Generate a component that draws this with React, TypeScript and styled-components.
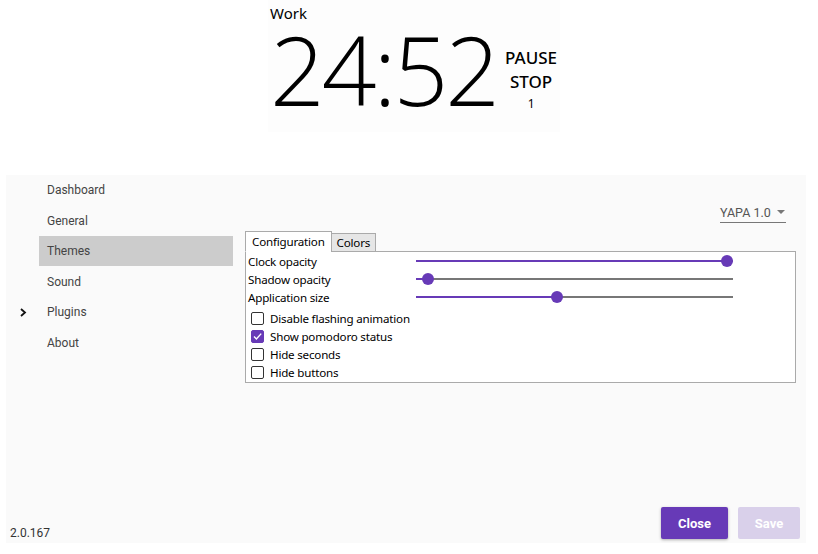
import React from "react";
import styled, { createGlobalStyle } from "styled-components";

const GlobalStyle = createGlobalStyle`
  html, body {
    margin: 0;
    padding: 0;
    background: #ffffff;
  }
  body {
    font-family: Roboto, "Noto Sans", sans-serif;
    width: 818px;
    height: 554px;
    overflow: hidden;
  }
`;

const uiFont = `"Noto Sans", "Open Sans", sans-serif`;

const Page = styled.div`
  display: flex;
  flex-direction: column;
  width: 818px;
  height: 554px;
`;

const ClockBox = styled.div`
  margin-left: 268px;
  width: 292px;
  height: 132px;
  background: #fdfdfd;
  box-sizing: border-box;
  padding: 3px 0 0 2px;
  font-family: ${uiFont};
  color: #000;
`;

const ClockTitle = styled.div`
  font-size: 15px;
  line-height: 20px;
`;

const ClockRow = styled.div`
  display: flex;
  align-items: flex-start;
`;

const Time = styled.div`
  font-family: "Open Sans", sans-serif;
  font-weight: 300;
  font-size: 96px;
  line-height: 92px;
  letter-spacing: -3px;
`;

const Controls = styled.div`
  display: flex;
  flex-direction: column;
  align-items: center;
  margin-left: 8px;
  margin-top: 23px;
`;

const ControlButton = styled.div`
  font-size: 17px;
  font-weight: 500;
  line-height: 24px;
`;

const Counter = styled.div`
  font-size: 12px;
  line-height: 16px;
  margin-top: 2px;
`;

const Panel = styled.div`
  margin: 43px 12px 11px 6px;
  height: 368px;
  background: #fafafa;
  display: flex;
  flex-direction: column;
`;

const Main = styled.div`
  flex: 1;
  display: flex;
`;

const Sidebar = styled.nav`
  width: 239px;
  display: flex;
  flex-direction: column;
`;

const NavRow = styled.div`
  display: flex;
  align-items: center;
  height: 30.5px;
`;

const Marker = styled.div`
  width: 33px;
  display: flex;
  justify-content: center;
`;

const NavItem = styled.div<{ $active?: boolean }>`
  width: 194px;
  height: 30px;
  box-sizing: border-box;
  padding-left: 8px;
  display: flex;
  align-items: center;
  font-size: 12px;
  color: #444;
  background: ${(p) => (p.$active ? "#cccccc" : "transparent")};
`;

const Content = styled.div`
  flex: 1;
  display: flex;
  flex-direction: column;
  padding: 27px 10px 0 0;
`;

const SelectRow = styled.div`
  display: flex;
  justify-content: flex-end;
  padding-right: 10px;
`;

const Select = styled.div`
  width: 66px;
  height: 21px;
  box-sizing: border-box;
  border-bottom: 1px solid #777;
  display: flex;
  align-items: center;
  justify-content: space-between;
  font-size: 12.5px;
  color: #555;
`;

const Caret = styled.span`
  width: 0;
  height: 0;
  border-left: 4px solid transparent;
  border-right: 4px solid transparent;
  border-top: 4px solid #777;
  margin-right: 1px;
`;

const Tabs = styled.div`
  display: flex;
  align-items: flex-end;
  margin-top: 8px;
  position: relative;
  z-index: 1;
  margin-bottom: -1px;
`;

const Tab = styled.div<{ $active?: boolean }>`
  font-family: ${uiFont};
  font-size: 11.6px;
  letter-spacing: -0.2px;
  color: #000;
  box-sizing: border-box;
  border: 1px solid #aaa;
  border-bottom: ${(p) => (p.$active ? "1px solid #fff" : "1px solid #aaa")};
  background: ${(p) => (p.$active ? "#ffffff" : "#e6e6e6")};
  height: ${(p) => (p.$active ? "21px" : "19px")};
  padding: ${(p) => (p.$active ? "0 6px" : "0 5px")};
  display: flex;
  align-items: center;
  margin-left: ${(p) => (p.$active ? "0" : "-1px")};
`;

const ConfigBox = styled.div`
  height: 132px;
  box-sizing: border-box;
  border: 1px solid #aaa;
  background: #ffffff;
  padding: 0 0 0 2px;
  font-family: ${uiFont};
  font-size: 11.6px;
  letter-spacing: -0.2px;
  color: #000;
`;

const SliderRow = styled.div`
  display: grid;
  grid-template-columns: 168px 317px;
  align-items: center;
  height: 18px;
`;

const Track = styled.div`
  position: relative;
  height: 2px;
  background: #777;
`;

const Fill = styled.div`
  height: 2px;
  background: #673ab7;
`;

const Thumb = styled.div`
  position: absolute;
  top: -5px;
  width: 12px;
  height: 12px;
  margin-left: -6px;
  border-radius: 50%;
  background: #673ab7;
`;

const CheckList = styled.div`
  margin-top: 3px;
  display: flex;
  flex-direction: column;
`;

const CheckRow = styled.label`
  display: flex;
  align-items: center;
  height: 18px;
  padding-left: 3px;
`;

const Box = styled.span<{ $checked?: boolean }>`
  width: 13px;
  height: 13px;
  box-sizing: border-box;
  border: 1px solid ${(p) => (p.$checked ? "#673ab7" : "#333")};
  border-radius: 2px;
  background: ${(p) => (p.$checked ? "#673ab7" : "#fff")};
  display: flex;
  align-items: center;
  justify-content: center;
  margin-right: 6px;
`;

const Footer = styled.div`
  display: flex;
  justify-content: space-between;
  align-items: flex-end;
  padding: 0 6px 4px 4px;
`;

const Version = styled.div`
  font-size: 12px;
  color: #333;
  line-height: 14px;
  margin-bottom: -1px;
`;

const Buttons = styled.div`
  display: flex;
  gap: 10px;
`;

const Button = styled.button<{ $disabled?: boolean; $w: number }>`
  width: ${(p) => p.$w}px;
  height: 32px;
  border: none;
  border-radius: 2px;
  font-family: Roboto, sans-serif;
  font-weight: 700;
  font-size: 13px;
  color: #fff;
  background: ${(p) => (p.$disabled ? "#d9d0ea" : "#673ab7")};
  box-shadow: ${(p) => (p.$disabled ? "none" : "0 1px 3px rgba(0,0,0,0.3)")};
  cursor: pointer;
`;

const nav = ["Dashboard", "General", "Themes", "Sound", "Plugins", "About"];

const sliders = [
  { label: "Clock opacity", value: 98 },
  { label: "Shadow opacity", value: 3.8 },
  { label: "Application size", value: 44.5 },
];

const checks = [
  { label: "Disable flashing animation", checked: false },
  { label: "Show pomodoro status", checked: true },
  { label: "Hide seconds", checked: false },
  { label: "Hide buttons", checked: false },
];

const Chevron = () => (
  <svg width="8" height="9" viewBox="0 0 8 9">
    <path d="M2 1 L6 4.5 L2 8" fill="none" stroke="#111" strokeWidth="1.8" />
  </svg>
);

const Check = () => (
  <svg width="11" height="11" viewBox="0 0 11 11">
    <path d="M2 5.6 L4.4 8 L9.2 2.6" fill="none" stroke="#fff" strokeWidth="1.4" />
  </svg>
);

export default function App() {
  return (
    <Page>
      <GlobalStyle />
      <ClockBox>
        <ClockTitle>Work</ClockTitle>
        <ClockRow>
          <Time>24:52</Time>
          <Controls>
            <ControlButton>PAUSE</ControlButton>
            <ControlButton>STOP</ControlButton>
            <Counter>1</Counter>
          </Controls>
        </ClockRow>
      </ClockBox>
      <Panel>
        <Main>
          <Sidebar>
            {nav.map((item) => (
              <NavRow key={item}>
                <Marker>{item === "Plugins" && <Chevron />}</Marker>
                <NavItem $active={item === "Themes"}>{item}</NavItem>
              </NavRow>
            ))}
          </Sidebar>
          <Content>
            <SelectRow>
              <Select>
                YAPA 1.0
                <Caret />
              </Select>
            </SelectRow>
            <Tabs>
              <Tab $active>Configuration</Tab>
              <Tab>Colors</Tab>
            </Tabs>
            <ConfigBox>
              {sliders.map((s) => (
                <SliderRow key={s.label}>
                  <span>{s.label}</span>
                  <Track>
                    <Fill style={{ width: `${s.value}%` }} />
                    <Thumb style={{ left: `${s.value}%` }} />
                  </Track>
                </SliderRow>
              ))}
              <CheckList>
                {checks.map((c) => (
                  <CheckRow key={c.label}>
                    <Box $checked={c.checked}>{c.checked && <Check />}</Box>
                    {c.label}
                  </CheckRow>
                ))}
              </CheckList>
            </ConfigBox>
          </Content>
        </Main>
        <Footer>
          <Version>2.0.167</Version>
          <Buttons>
            <Button $w={67}>Close</Button>
            <Button $w={62} $disabled>
              Save
            </Button>
          </Buttons>
        </Footer>
      </Panel>
    </Page>
  );
}
